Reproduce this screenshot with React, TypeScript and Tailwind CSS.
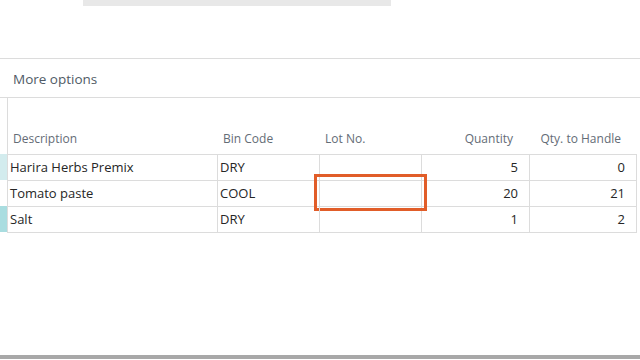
const rows = [
  { desc: "Harira Herbs Premix", bin: "DRY", lot: "", qty: 5, handle: 0, mark: "bg-[#d3ecee]" },
  { desc: "Tomato paste", bin: "COOL", lot: "", qty: 20, handle: 21, mark: "" },
  { desc: "Salt", bin: "DRY", lot: "", qty: 1, handle: 2, mark: "bg-[#a9dde0]" },
];

export default function App() {
  return (
    <div className="flex h-[360px] w-[640px] flex-col bg-white font-['Segoe_UI','Open_Sans',sans-serif] text-[#262626]">
      <div className="ml-[83px] h-[6px] w-[308px] bg-[#e8e8e8]" />
      <div className="h-[53px] border-b border-[#dcdcdc]" />
      <div className="flex h-[39px] items-center border-b border-[#dcdcdc] pl-[13px] pt-[2px] text-[13.5px] text-[#505a66]">
        More options
      </div>

      <div className="flex">
        <div className="flex w-[7px] flex-col">
          <div className="h-[56px]" />
          {rows.map((r, i) => (
            <div key={i} className={`h-[26px] ${r.mark}`} />
          ))}
        </div>
        <div className="w-[630px] border-l border-[#dcdcdc]">
          <div className="flex h-[56px] items-end pb-[6px] text-[12px] text-[#646c76]">
            <div className="w-[209px] pl-[5px]">Description</div>
            <div className="w-[102px] pl-[6px]">Bin Code</div>
            <div className="w-[102px] pl-[6px]">Lot No.</div>
            <div className="w-[108px] pr-[16px] text-right">Quantity</div>
            <div className="w-[108px] pr-[16px] text-right">Qty. to Handle</div>
          </div>
          <div className="border-t border-[#dcdcdc] text-[13px]">
            {rows.map((r, i) => (
              <div key={i} className="flex h-[26px] items-center border-b border-[#dcdcdc]">
                <div className="flex h-full w-[209px] items-center pl-[2px]">{r.desc}</div>
                <div className="flex h-full w-[102px] items-center border-l border-[#dcdcdc] pl-[2px]">{r.bin}</div>
                <div className="relative flex h-full w-[102px] items-center border-l border-[#dcdcdc] pl-[3px]">
                  {r.lot}
                  {i === 1 && (
                    <div className="absolute left-[-6px] top-[-7px] h-[37px] w-[113px] border-[3px] border-[#e15d29]" />
                  )}
                </div>
                <div className="flex h-full w-[108px] items-center justify-end border-l border-[#dcdcdc] pr-[11px]">{r.qty}</div>
                <div className="flex h-full w-[108px] items-center justify-end border-x border-[#dcdcdc] pr-[11px]">{r.handle}</div>
              </div>
            ))}
          </div>
        </div>
      </div>

      <div className="flex-1" />
      <div className="mb-[1px] h-[4px] bg-[#a8a8a8]" />
    </div>
  );
}
